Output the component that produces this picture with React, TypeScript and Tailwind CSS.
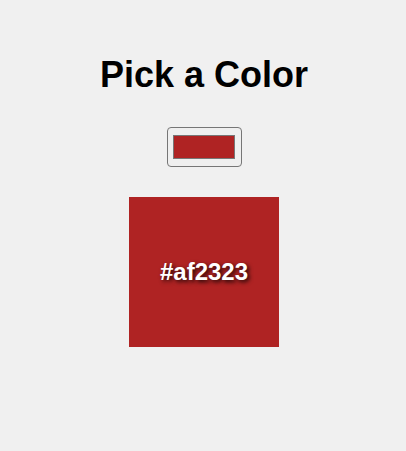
import { useState } from 'react';

export default function App() {
  const [color, setColor] = useState('#af2323');

  return (
    <div className="flex min-h-screen flex-col items-center bg-[#f0f0f0] pl-[2px] pt-[54px] font-['Liberation_Sans',Arial,sans-serif] text-black">
      <h1 className="text-[36px] font-bold leading-[41px]">Pick a Color</h1>

      <label className="mt-[32px] flex h-[40px] w-[75px] cursor-pointer items-center justify-center rounded-[4px] border border-[#767676] bg-[#efefef]">
        <span className="block h-[24px] w-[62px] border border-[#777777]" style={{ backgroundColor: color }} />
        <input
          type="color"
          value={color}
          onChange={(e) => setColor(e.target.value)}
          className="sr-only"
        />
      </label>

      <div
        className="mt-[30px] flex h-[150px] w-[150px] items-center justify-center"
        style={{ backgroundColor: color }}
      >
        <span className="text-[24px] font-bold text-white [text-shadow:2px_2px_4px_rgba(0,0,0,0.85)]">{color}</span>
      </div>
    </div>
  );
}
